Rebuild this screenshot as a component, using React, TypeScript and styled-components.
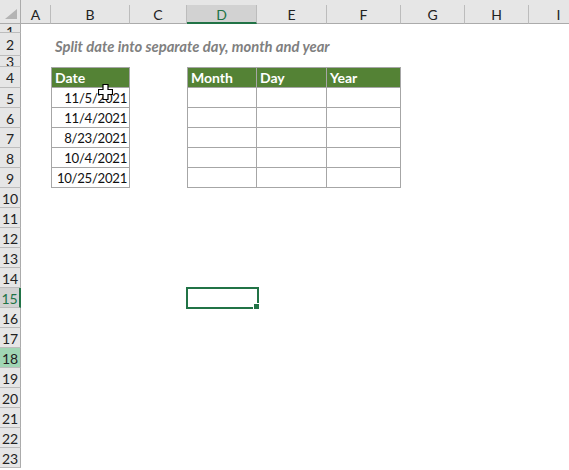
import React from "react";
import styled, { createGlobalStyle } from "styled-components";

const GlobalStyle = createGlobalStyle`
  html, body {
    margin: 0;
    padding: 0;
    background: #ffffff;
  }
  body {
    font-family: Lato, "Liberation Sans", sans-serif;
    overflow: hidden;
  }
`;

const COLUMNS = ["A", "B", "C", "D", "E", "F", "G", "H", "I"];
const COL_WIDTHS = [30, 79, 57, 70, 70, 74, 64, 64, 60];
const ROW_HEIGHTS = [9, 23, 11, 21, ...Array(19).fill(20)];

const DATES = ["11/5/2021", "11/4/2021", "8/23/2021", "10/4/2021", "10/25/2021"];
const OUT_HEADERS = ["Month", "Day", "Year"];

const ACTIVE_COL = "D";
const ACTIVE_ROW = 15;
const MARKED_ROW = 18;

const GREEN = "#548235";
const SELECT = "#217346";
const LINE = "#a6a6a6";

const Sheet = styled.div`
  display: grid;
  grid-template-columns: 21px ${COL_WIDTHS.map((w) => `${w}px`).join(" ")};
  grid-template-rows: 24px ${ROW_HEIGHTS.map((h) => `${h}px`).join(" ")};
  width: 569px;
  height: 470px;
  overflow: hidden;
  background: #ffffff;
`;

const HeaderStrip = styled.div`
  grid-row: 1;
  grid-column: 1 / -1;
  background: #e6e6e6;
  border-bottom: 1px solid #ababab;
`;

const Corner = styled.div`
  grid-row: 1;
  grid-column: 1;
  border-right: 1px solid #ababab;
  border-bottom: 1px solid #ababab;
  display: flex;
  align-items: flex-end;
  justify-content: flex-end;
  padding: 0 3px 4px 0;
  svg {
    display: block;
  }
`;

const ColHead = styled.div<{ $col: number; $active: boolean }>`
  grid-row: 1;
  grid-column: ${(p) => p.$col};
  align-self: end;
  height: 19px;
  box-sizing: border-box;
  display: flex;
  align-items: center;
  justify-content: center;
  padding-top: 1px;
  font-size: 14px;
  color: ${(p) => (p.$active ? SELECT : "#222222")};
  background: ${(p) => (p.$active ? "#d2d2d2" : "transparent")};
  border-right: 1px solid #bcbcbc;
  border-bottom: ${(p) => (p.$active ? `2px solid ${SELECT}` : "1px solid #ababab")};
`;

const RowHead = styled.div<{ $row: number; $active: boolean; $marked: boolean }>`
  grid-column: 1;
  grid-row: ${(p) => p.$row + 1};
  box-sizing: border-box;
  overflow: hidden;
  display: flex;
  align-items: ${(p) => (p.$row === 1 ? "flex-start" : "center")};
  justify-content: center;
  padding-top: ${(p) => (p.$row === 1 ? "1px" : "2px")};
  font-size: 14px;
  line-height: 14px;
  color: ${(p) => (p.$active ? SELECT : "#222222")};
  background: ${(p) => (p.$marked ? "#a0d6b4" : p.$active ? "#d2d2d2" : "#e6e6e6")};
  border-bottom: 1px solid #bcbcbc;
  border-right: ${(p) => (p.$active ? `2px solid ${SELECT}` : "1px solid #ababab")};
`;

const Title = styled.div`
  grid-row: 3;
  grid-column: 3 / span 6;
  display: flex;
  align-items: center;
  padding: 2px 0 0 4px;
  white-space: nowrap;
  font-size: 14.8px;
  font-weight: 700;
  font-style: italic;
  color: #808080;
`;

const Cell = styled.div<{
  $row: number;
  $col: number;
  $head?: boolean;
  $first?: boolean;
  $top?: boolean;
}>`
  grid-row: ${(p) => p.$row + 1};
  grid-column: ${(p) => p.$col};
  position: relative;
  box-sizing: border-box;
  display: flex;
  align-items: flex-end;
  justify-content: ${(p) => (p.$head ? "flex-start" : "flex-end")};
  padding: 0 2px 1px 3px;
  font-size: ${(p) => (p.$head ? "14px" : "13.2px")};
  letter-spacing: ${(p) => (p.$head ? "0" : "-0.3px")};
  line-height: 16px;
  white-space: nowrap;
  font-weight: ${(p) => (p.$head ? 700 : 400)};
  color: ${(p) => (p.$head ? "#ffffff" : "#111111")};
  background: ${(p) => (p.$head ? GREEN : "#ffffff")};
  border-right: 1px solid ${LINE};
  border-bottom: 1px solid ${LINE};
  border-left: ${(p) => (p.$first ? `1px solid ${LINE}` : "none")};
  border-top: ${(p) => (p.$top ? `1px solid ${LINE}` : "none")};
`;

const Selection = styled.div<{ $row: number; $col: number }>`
  grid-row: ${(p) => p.$row + 1};
  grid-column: ${(p) => p.$col};
  position: relative;
  margin: -1px -2px -1px -1px;
  border: 2px solid ${SELECT};
`;

const FillHandle = styled.span`
  position: absolute;
  right: -3px;
  bottom: -3px;
  width: 5px;
  height: 5px;
  background: ${SELECT};
  border: 1px solid #ffffff;
`;

const Pointer = styled.svg`
  position: absolute;
  left: 46px;
  top: -4px;
  pointer-events: none;
`;

const colIndex = (letter: string) => COLUMNS.indexOf(letter) + 2;

const CornerTriangle = () => (
  <svg width="12" height="10" viewBox="0 0 12 10">
    <polygon points="12,0 12,10 0,10" fill="#b4b4b4" />
  </svg>
);

const CrossPointer = () => (
  <Pointer width="15" height="16" viewBox="0 0 15 16">
    <path
      d="M5 0.5 H10 V5.5 H14.5 V10.5 H10 V15.5 H5 V10.5 H0.5 V5.5 H5 Z"
      fill="#ffffff"
      stroke="#000000"
      strokeWidth="1.2"
    />
  </Pointer>
);

const App = () => {
  const rowCount = ROW_HEIGHTS.length;
  const b = colIndex("B");
  const d = colIndex("D");

  return (
    <>
      <GlobalStyle />
      <Sheet>
        <HeaderStrip />
        <Corner>
          <CornerTriangle />
        </Corner>
        {COLUMNS.map((c, i) => (
          <ColHead key={c} $col={i + 2} $active={c === ACTIVE_COL}>
            {c}
          </ColHead>
        ))}
        {Array.from({ length: rowCount }, (_, i) => i + 1).map((r) => (
          <RowHead key={r} $row={r} $active={r === ACTIVE_ROW} $marked={r === MARKED_ROW}>
            {r}
          </RowHead>
        ))}

        <Title>Split date into separate day, month and year</Title>

        <Cell $row={4} $col={b} $head $first $top>
          Date
        </Cell>
        {DATES.map((date, i) => (
          <Cell key={date} $row={5 + i} $col={b} $first>
            {date}
            {i === 0 && <CrossPointer />}
          </Cell>
        ))}

        {OUT_HEADERS.map((h, j) => (
          <Cell key={h} $row={4} $col={d + j} $head $first={j === 0} $top>
            {h}
          </Cell>
        ))}
        {DATES.map((date, i) =>
          OUT_HEADERS.map((h, j) => (
            <Cell key={`${date}-${h}`} $row={5 + i} $col={d + j} $first={j === 0} />
          ))
        )}

        <Selection $row={ACTIVE_ROW} $col={colIndex(ACTIVE_COL)}>
          <FillHandle />
        </Selection>
      </Sheet>
    </>
  );
};

export default App;
